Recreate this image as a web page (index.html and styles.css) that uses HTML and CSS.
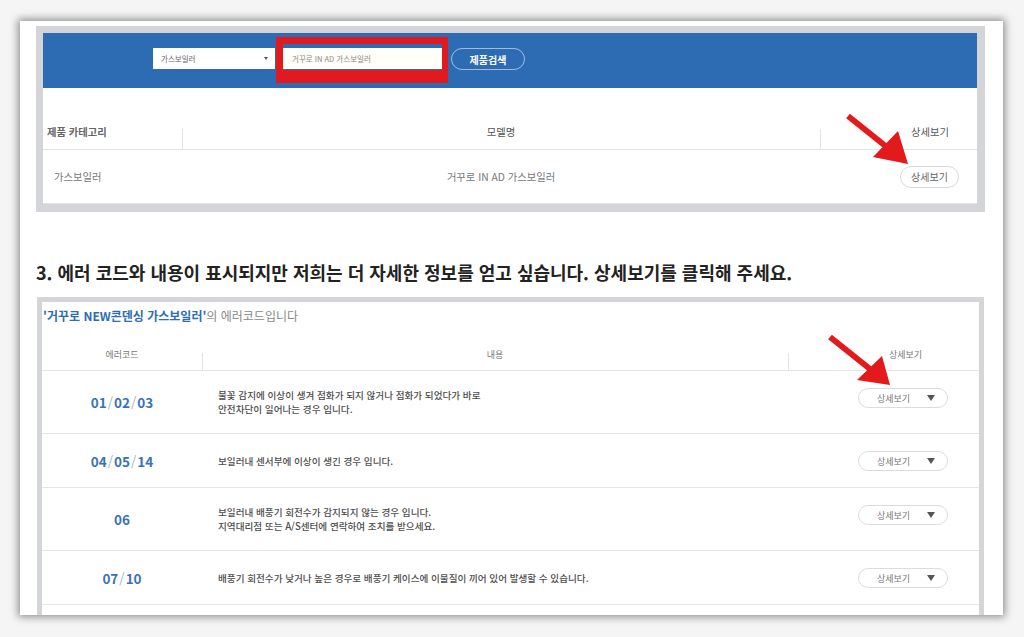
FILE: index.html
```html
<!DOCTYPE html>
<html lang="ko">
<head>
<meta charset="utf-8">
<title>에러코드</title>
<link rel="stylesheet" href="styles.css">
</head>
<body>
<div class="sheet">
  <section class="panel panel-search">
    <div class="searchbar">
      <div class="select"><span>가스보일러</span><span class="caret"></span></div>
      <div class="input-wrap">
        <div class="input">거꾸로 IN AD 가스보일러</div>
        <div class="highlight"></div>
      </div>
      <div class="search-btn">제품검색</div>
    </div>
    <div class="ptable">
      <div class="prow phead">
        <div class="pc c1">제품 카테고리</div>
        <div class="pc c2 sep">모델명</div>
        <div class="pc c3 sep">상세보기</div>
      </div>
      <div class="prow pbody">
        <div class="pc c1">가스보일러</div>
        <div class="pc c2">거꾸로 IN AD 가스보일러</div>
        <div class="pc c3"><span class="pbtn">상세보기</span></div>
      </div>
    </div>
  </section>

  <h2 class="step">3. 에러 코드와 내용이 표시되지만 저희는 더 자세한 정보를 얻고 싶습니다. 상세보기를 클릭해 주세요.</h2>

  <section class="panel panel-errors">
    <p class="etitle"><strong>'거꾸로 NEW콘덴싱 가스보일러'</strong>의 에러코드입니다</p>
    <div class="etable">
      <div class="erow ehead">
        <div class="ec code-h">에러코드</div>
        <div class="ec desc-h sep">내용</div>
        <div class="ec act-h sep">상세보기</div>
      </div>
      <div class="erow double">
        <div class="ec code">01<span class="sl">/</span>02<span class="sl">/</span>03</div>
        <div class="ec desc"><p>불꽃 감지에 이상이 생겨 점화가 되지 않거나 점화가 되었다가 바로<br>안전차단이 일어나는 경우 입니다.</p></div>
        <div class="ec act"><span class="ebtn">상세보기<i class="tri"></i></span></div>
      </div>
      <div class="erow single">
        <div class="ec code">04<span class="sl">/</span>05<span class="sl">/</span>14</div>
        <div class="ec desc"><p>보일러내 센서부에 이상이 생긴 경우 입니다.</p></div>
        <div class="ec act"><span class="ebtn">상세보기<i class="tri"></i></span></div>
      </div>
      <div class="erow double">
        <div class="ec code">06</div>
        <div class="ec desc"><p>보일러내 배풍기 회전수가 감지되지 않는 경우 입니다.<br>지역대리점 또는 A/S센터에 연락하여 조치를 받으세요.</p></div>
        <div class="ec act"><span class="ebtn">상세보기<i class="tri"></i></span></div>
      </div>
      <div class="erow single">
        <div class="ec code">07<span class="sl">/</span>10</div>
        <div class="ec desc"><p>배풍기 회전수가 낮거나 높은 경우로 배풍기 케이스에 이물질이 끼어 있어 발생할 수 있습니다.</p></div>
        <div class="ec act"><span class="ebtn">상세보기<i class="tri"></i></span></div>
      </div>
      <div class="erow single"></div>
    </div>
  </section>

  <svg class="annot" width="983" height="594" viewBox="20 21 983 594" aria-hidden="true">
    <line x1="848" y1="116" x2="888" y2="148" stroke="#e31a1c" stroke-width="6"/>
    <polygon points="908,164 873,157 898,131" fill="#e31a1c"/>
    <line x1="830" y1="337" x2="870" y2="369" stroke="#e31a1c" stroke-width="6"/>
    <polygon points="890,385 857,380 882,356" fill="#e31a1c"/>
  </svg>
</div>
</body>
</html>
```

FILE: styles.css
```css
* { box-sizing: border-box; margin: 0; padding: 0; }

html, body { background: #f5f5f5; }

body {
  width: 1024px;
  height: 637px;
  overflow: hidden;
  padding: 21px 0 0 20px;
  font-family: "Noto Sans CJK KR", "Noto Sans", sans-serif;
  color: #555;
}

.sheet {
  position: relative;
  width: 983px;
  height: 594px;
  background: #fff;
  box-shadow: 0 0 8px 2px rgba(0, 0, 0, 0.42);
  overflow: hidden;
  padding: 5px 0 0 16px;
}

/* ---------- panel 1 : search ---------- */
.panel {
  border-style: solid;
  border-color: #d3d5d8;
  background: #fff;
}

.panel-search {
  width: 949px;
  border-width: 7px 8px 8px 7px;
}

.searchbar {
  height: 55px;
  background: #2d6cb3;
  display: flex;
  align-items: flex-start;
  padding: 15px 0 0 110px;
}

.select {
  width: 122px;
  height: 21px;
  background: #fff;
  display: flex;
  align-items: center;
  justify-content: space-between;
  padding: 0 7px 0 8px;
  font-size: 7.5px;
  color: #666;
}

.caret {
  width: 0;
  height: 0;
  border-left: 2px solid transparent;
  border-right: 2px solid transparent;
  border-top: 3px solid #555;
}

.input-wrap {
  position: relative;
  margin-left: 8px;
}

.input {
  width: 159px;
  height: 21px;
  background: #fffef9;
  padding-left: 9px;
  font-size: 7.5px;
  line-height: 21px;
  color: #888;
}

.highlight {
  position: absolute;
  left: -7px;
  top: -11px;
  right: -6px;
  bottom: -14px;
  border-style: solid;
  border-color: #e01a1f;
  border-width: 7px 6px 13px 7px;
}

.search-btn {
  margin-left: 9px;
  width: 74px;
  height: 22px;
  border: 1px solid rgba(255, 255, 255, 0.55);
  border-radius: 12px;
  color: #fff;
  font-size: 10px;
  font-weight: 700;
  display: flex;
  align-items: center;
  justify-content: center;
}

.ptable { margin-top: 32px; }

.prow {
  display: grid;
  grid-template-columns: 139px 638px 1fr;
  border-bottom: 1px solid #e3e3e3;
}

.phead {
  height: 30px;
  font-size: 10.3px;
  line-height: 24px;
  color: #555;
}

.phead .c1 { padding-left: 4px; font-weight: 700; color: #666; }
.phead .c2 { text-align: center; }
.phead .c3 { text-align: right; padding-right: 28px; }

.sep {
  background: linear-gradient(#e3e3e3, #e3e3e3) left bottom / 1px 20px no-repeat;
}

.pbody {
  height: 54px;
  align-items: center;
  font-size: 10.3px;
  color: #777;
}

.pbody .c1 { padding-left: 11px; }
.pbody .c2 { text-align: center; }
.pbody .c3 { display: flex; justify-content: flex-end; padding-right: 18px; }

.pbtn {
  width: 59px;
  height: 22px;
  border: 1px solid #d8d8d8;
  border-radius: 11px;
  font-size: 10px;
  color: #666;
  display: flex;
  align-items: center;
  justify-content: center;
}

/* ---------- heading ---------- */
.step {
  margin-top: 48px;
  font-size: 18px;
  line-height: 24px;
  font-weight: 700;
  color: #222;
}

/* ---------- panel 2 : error codes ---------- */
.panel-errors {
  margin-top: 13px;
  margin-left: 1px;
  width: 947px;
  border-width: 5px 5px 0 5px;
}

.etitle {
  height: 38px;
  padding: 6px 0 0 1px;
  font-size: 12px;
  line-height: 16px;
  color: #888;
}

.etitle strong { color: #2f6db3; font-weight: 700; }

.erow {
  display: grid;
  grid-template-columns: 160px 586px 1fr;
  border-bottom: 1px solid #e5e5e5;
}

.ehead {
  height: 31px;
  font-size: 9px;
  line-height: 30px;
  color: #777;
}

.ehead .sep {
  background: linear-gradient(#e3e3e3, #e3e3e3) left bottom / 1px 17px no-repeat;
}

.code-h { text-align: center; }
.desc-h { text-align: center; }
.act-h { text-align: right; padding-right: 57px; }

.double { height: 63px; }
.single { height: 54px; }

.ec.code {
  display: flex;
  align-items: center;
  justify-content: center;
  font-size: 13.5px;
  font-weight: 700;
  color: #3a72b4;
}

.sl {
  font-weight: 400;
  color: #a6b3c2;
  margin: 0 1px;
}

.ec.desc {
  display: flex;
  align-items: center;
  padding-left: 16px;
}

.ec.desc p {
  font-size: 9.6px;
  line-height: 14px;
  font-weight: 500;
  color: #4d4d4d;
}

.ec.act {
  display: flex;
  justify-content: flex-end;
  align-items: flex-start;
  padding: 17px 31px 0 0;
}

.ebtn {
  width: 90px;
  height: 20px;
  border: 1px solid #dcdcdc;
  border-radius: 10px;
  display: flex;
  align-items: center;
  gap: 17px;
  padding-left: 18px;
  font-size: 9px;
  color: #777;
}

.tri {
  display: block;
  width: 0;
  height: 0;
  border-left: 4px solid transparent;
  border-right: 4px solid transparent;
  border-top: 6px solid #555;
}

/* ---------- annotations ---------- */
.annot {
  position: absolute;
  left: 0;
  top: 0;
  pointer-events: none;
}
```
